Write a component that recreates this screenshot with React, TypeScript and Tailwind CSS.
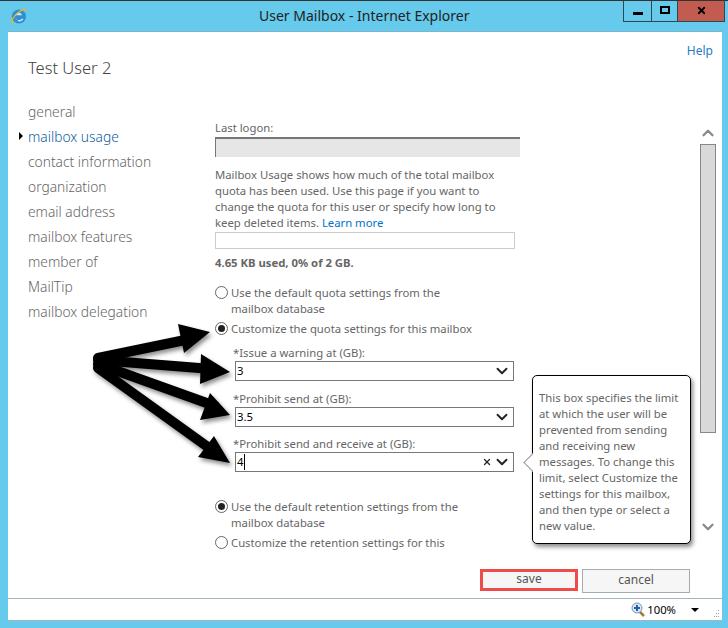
import { ChevronDown, ChevronUp, X } from "lucide-react";

const navItems = [
    "general",
    "mailbox usage",
    "contact information",
    "organization",
    "email address",
    "mailbox features",
    "member of",
    "MailTip",
    "mailbox delegation",
];

function IeLogo() {
    return (
        <svg width="17" height="17" viewBox="0 0 18 18" className="ml-[10px]">
            <circle cx="9.500" cy="9" r="7.500" fill="#2f8fd6" />
            <path d="M5.500 7.800h7.200c-.2-1.700-1.600-2.800-3.400-2.800-1.900 0-3.400 1.100-3.800 2.800zM5.600 10.300c.4 1.500 1.800 2.500 3.600 2.500 1.400 0 2.500-.5 3.300-1.500h1.900c-1 1.900-2.900 3-5.200 3" fill="#c6e6f8" />
            <path d="M1.500 16c-1.500-1.500 1.500-7 5.500-10.500C11 2 15.500 0 16.800 1.300c.8.8.2 2.400-.8 3.700.3-1.200.4-2.200-.1-2.700-1-1-4.600 1-8 4.100C4.500 9.500 2 13.800 2.900 15c.5.500 1.600.4 2.800-.1-1.500 1.100-3.300 1.800-4.200 1.100z" fill="#f2b90f" />
        </svg>
    );
}

function Radio({ checked }: { checked?: boolean }) {
    return (
        <span className="mt-[1px] flex h-[13px] w-[13px] shrink-0 items-center justify-center rounded-full border border-[#666]">
            {checked && <span className="h-[7px] w-[7px] rounded-full bg-[#222]" />}
        </span>
    );
}

function QuotaInput({ value, clear, caret }: { value: string; clear?: boolean; caret?: boolean }) {
    return (
        <div className="ml-[20px] flex h-[20px] w-[279px] items-center border border-[#777] bg-white pl-[1px] pr-[2px] text-black">
            <span className={caret ? "border-r border-black pr-[1px] leading-[16px]" : "leading-[16px]"}>{value}</span>
            {clear && <X size={10} strokeWidth={3} className="ml-auto mr-[1px] text-[#222]" />}
            <ChevronDown size={18} strokeWidth={2.5} className={clear ? "text-[#222]" : "ml-auto text-[#222]"} />
        </div>
    );
}

export default function App() {
    return (
        <div className="relative flex h-[628px] w-[728px] flex-col overflow-hidden bg-[#65caeb] text-[11.300px] leading-[16px] text-[#666] [font-family:'Noto_Sans',sans-serif]">
            {/* title bar */}
            <div className="relative flex h-[31px] shrink-0 items-center border-t border-[#333]">
                <IeLogo />
                <div className="absolute left-[259px] top-[6px] text-[14px] leading-[18px] text-[#222]">
                    User Mailbox - Internet Explorer
                </div>
                <div className="absolute left-[623px] top-0 flex h-[21px] border border-t-0 border-[#2f4653]">
                    <div className="flex w-[28px] items-end justify-center border-r border-[#2f4653] pb-[6px]">
                        <div className="h-[3px] w-[10px] bg-black" />
                    </div>
                    <div className="flex w-[26px] items-center justify-center border-r border-[#2f4653] pb-[2px]">
                        <div className="h-[8px] w-[10px] border-2 border-black" />
                    </div>
                    <div className="flex w-[46px] items-center justify-center bg-[#c25b50] pb-[2px]">
                        <X size={11} strokeWidth={4} className="text-black" />
                    </div>
                </div>
            </div>

            <div className="ml-[8px] flex h-[590px] w-[714px] shrink-0 flex-col border-t border-[#7fb2cb] bg-white">
                <div className="pr-[9px] pt-[11px] text-right text-[12px] text-[#1f7cc4]">Help</div>
                <div className="-mt-[3px] pl-[20px] text-[16.500px] font-light leading-[24px] text-[#444]">Test User 2</div>

                <div className="mt-[19px] flex">
                    <div className="w-[207px] shrink-0 pl-[20px] text-[13.800px] font-light leading-[25px] text-[#666]">
                        {navItems.map((item) => (
                            <div key={item} className={item === "mailbox usage" ? "relative text-[#0e5f9f]" : ""}>
                                {item === "mailbox usage" && (
                                    <span className="absolute left-[-9px] top-[8px] border-y-[4px] border-l-[4px] border-y-transparent border-l-black" />
                                )}
                                {item}
                            </div>
                        ))}
                    </div>

                    <div className="h-[453px] w-[485px] shrink-0 overflow-hidden pt-[21px]">
                        <div>Last logon:</div>
                        <div className="mt-[1px] h-[20px] w-[305px] border-l border-t-2 border-[#777] bg-[#e6e6e6]" />
                        <p className="mt-[10px] whitespace-nowrap">
                            Mailbox Usage shows how much of the total mailbox
                            <br />
                            quota has been used. Use this page if you want to
                            <br />
                            change the quota for this user or specify how long to
                            <br />
                            keep deleted items. <span className="text-[#0072c6]">Learn more</span>
                        </p>
                        <div className="mt-[1px] h-[17px] w-[300px] border border-[#ccc]" />
                        <div className="mt-[6px] font-bold">4.65 KB used, 0% of 2 GB.</div>

                        <div className="mt-[14px] flex gap-[3px]">
                            <Radio />
                            <span>
                                Use the default quota settings from the
                                <br />
                                mailbox database
                            </span>
                        </div>
                        <div className="mt-[4px] flex gap-[3px]">
                            <Radio checked />
                            <span>Customize the quota settings for this mailbox</span>
                        </div>

                        <div className="ml-[18px] mt-[8px]">*Issue a warning at (GB):</div>
                        <QuotaInput value="3" />
                        <div className="ml-[18px] mt-[10px]">*Prohibit send at (GB):</div>
                        <QuotaInput value="3.5" />
                        <div className="ml-[18px] mt-[9px]">*Prohibit send and receive at (GB):</div>
                        <QuotaInput value="4" clear caret />

                        <div className="mt-[27px] flex gap-[3px]">
                            <Radio checked />
                            <span>
                                Use the default retention settings from the
                                <br />
                                mailbox database
                            </span>
                        </div>
                        <div className="mt-[4px] flex gap-[3px]">
                            <Radio />
                            <span>Customize the retention settings for this</span>
                        </div>
                    </div>

                    {/* scrollbar */}
                    <div className="flex w-[16px] shrink-0 flex-col items-center pt-[25px]">
                        <ChevronUp size={18} strokeWidth={3} className="text-[#888]" />
                        <div className="mt-[2px] h-[289px] w-[16px] shrink-0 border border-[#888] bg-[#d9d9d9]" />
                        <ChevronDown size={18} strokeWidth={3} className="mt-[85px] text-[#888]" />
                    </div>
                </div>

                <div className="mt-[17px] flex justify-end gap-[4px] pr-[32px] text-[12px] text-[#555]">
                    <div className="flex h-[22px] w-[98px] items-center justify-center border-[3px] border-[#ee4b4b] bg-[#f6f6f6] pb-[2px]">
                        save
                    </div>
                    <div className="flex h-[24px] w-[108px] items-center justify-center border border-[#a3adad] bg-[#f6f6f6] pb-[3px]">
                        cancel
                    </div>
                </div>

                <div className="mt-auto flex h-[23px] items-center border-y border-[#a5b3bb] bg-white pr-[2px] text-black">
                    <svg width="14" height="15" viewBox="0 0 14 15" className="ml-auto">
                        <line x1="8" y1="9" x2="13" y2="14" stroke="#a5783c" strokeWidth="2.500" />
                        <circle cx="6" cy="6" r="5" fill="#d8e8f5" stroke="#7f95a8" />
                        <path d="M3 6h6M6 3v6" stroke="#1f5fb5" strokeWidth="2" />
                    </svg>
                    <span className="ml-[2px]">100%</span>
                    <span className="ml-[15px] border-x-[4px] border-t-[4px] border-x-transparent border-t-black" />
                    <svg width="8" height="8" viewBox="0 0 8 8" className="ml-[13px] mt-[8px]">
                        <path d="M6 0h1v1H6zM4 3h1v1H4zM6 3h1v1H6zM2 6h1v1H2zM4 6h1v1H4zM6 6h1v1H6z" fill="#9aa5aa" />
                    </svg>
                </div>
            </div>

            {/* callout */}
            <div className="absolute left-[532px] top-[375px] h-[169px] w-[159px] rounded-[5px] border border-black bg-white pl-[6px] pt-[14px] shadow-[2px_3px_4px_rgba(0,0,0,0.45)]">
                <span className="absolute left-[-7px] top-[80px] h-[13px] w-[13px] rotate-45 border-b border-l border-[#999] bg-white" />
                <p className="relative whitespace-nowrap">
                    This box specifies the limit
                    <br />
                    at which the user will be
                    <br />
                    prevented from sending
                    <br />
                    and receiving new
                    <br />
                    messages. To change this
                    <br />
                    limit, select Customize the
                    <br />
                    settings for this mailbox,
                    <br />
                    and then type or select a
                    <br />
                    new value.
                </p>
            </div>

            {/* arrows drawn on top of the screenshot */}
            <svg width="728" height="628" className="pointer-events-none absolute left-0 top-0 drop-shadow-[2px_3px_2px_rgba(0,0,0,0.45)]">
                <g stroke="black" strokeWidth="10" strokeLinecap="round">
                    <line x1="98" y1="358" x2="190" y2="339" />
                    <line x1="98" y1="360" x2="212" y2="369" />
                    <line x1="98" y1="364" x2="215" y2="406" />
                    <line x1="98" y1="368" x2="212" y2="450" />
                </g>
                <polygon points="210,332 178,324 184,353" fill="black" />
                <polygon points="230,372 201,354 200,384" fill="black" />
                <polygon points="230,415 210,393 200,420" fill="black" />
                <polygon points="230,463 214,436 198,457" fill="black" />
            </svg>
        </div>
    );
}
